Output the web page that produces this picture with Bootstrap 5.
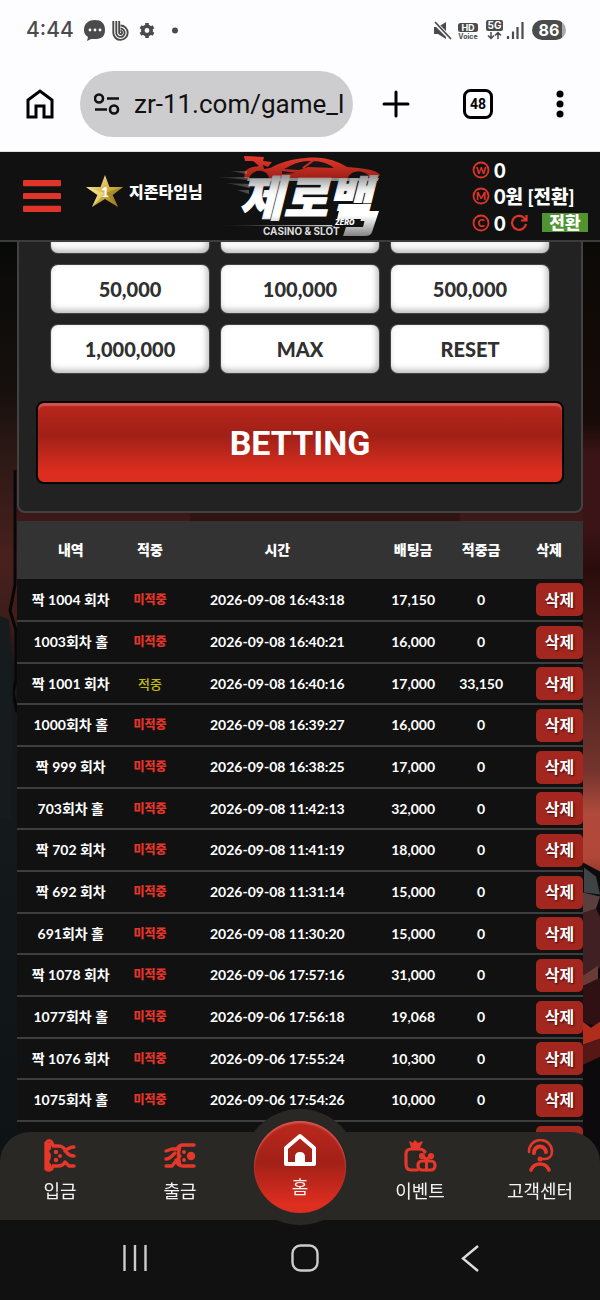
<!DOCTYPE html>
<html lang="ko">
<head>
<meta charset="utf-8">
<meta name="viewport" content="width=device-width, initial-scale=1">
<title>제로백</title>
<link href="https://cdn.jsdelivr.net/npm/bootstrap@5.3.0/dist/css/bootstrap.min.css" rel="stylesheet">
<style>
  body { font-family: Lato, "Noto Sans CJK KR", sans-serif; background: #0e0d0c; color: #fff; }
  button { font-family: inherit; }
  a { color: inherit; text-decoration: none; }

  /* phone status and browser bars */
  .phone-status { height: 60px; padding: 0 34px 0 26px; color: #4b4b4b; background: #fdfdff; }
  .clock { font: 500 21px/28px Inter, sans-serif; }
  .battery { width: 34px; height: 20px; border-radius: 10px; font: 700 16px/20px Inter, sans-serif; color: #fff;
    background: linear-gradient(90deg, #4b4b4b 87%, #aaa 87%); }
  .browser { height: 92px; padding: 0 24px 4px; background: #fdfdff; color: #000; border-bottom: 1px solid #ddd; }
  .browser-tools { gap: 50px; }
  .icon-btn { border: 0; background: none; padding: 0; color: inherit; display: flex; }
  .url { height: 66px; border-radius: 33px; background: #cdcdcf; padding: 0 8px 0 14px; margin-left: 24px; flex: 0 1 273px; min-width: 0; }
  .url input { border: 0; background: none; width: 100%; min-width: 0; padding: 0; font: 400 26px/36px Roboto, sans-serif; color: #111; outline: 0; }

  /* site header */
  .site-header { height: 90px; background: #111; border-bottom: 2px solid #3c3c3c; padding: 0 12px 0 23px; }
  .user { font-size: 16px; line-height: 24px; font-weight: 900; }
  .wallet { width: 116px; font-size: 19px; line-height: 24px; font-weight: 900; row-gap: 2px; }
  .wallet b { font-size: 20px; font-weight: 900; }
  .convert { background: #4f9430; color: #fff; border: 0; width: 46px; height: 19px; font-size: 17px; line-height: 18px; font-weight: 900; padding: 0; }

  /* page */
  .stage { position: relative; padding: 0 17px 138px; }
  .backdrop { position: absolute; inset: 0; width: 100%; height: 100%; }
  .bet-panel { position: relative; background: #222; border: 2px solid #424242; border-top: 0; border-radius: 0 0 8px 8px; padding: 0 17px 27px; margin-bottom: 8px; }
  .chips { display: grid; grid-template-columns: repeat(3, 1fr); gap: 12px; padding: 0 15px; margin-bottom: 28px; }
  .chip { height: 48px; border: 0; border-radius: 7px; background: #fff; color: #303030; font-size: 20px; font-weight: 900; line-height: 24px; padding: 0;
    box-shadow: inset -2px -3px 6px rgba(0,0,0,.28), 0 0 0 1px #444; }
  .chip-end { height: 11px; border-radius: 0 0 7px 7px; }
  .bet { display: block; width: 100%; height: 83px; border: 2px solid #080202; border-radius: 8px; color: #fff; font: 700 34px/40px Roboto, sans-serif;
    background: linear-gradient(#bb271c 0%, #a02017 40%, #dc2e20 88%, #dc2e20 100%); box-shadow: inset 0 3px 1px #cf534d; }

  .history { position: relative; table-layout: fixed; width: 100%; text-align: center; background: #111; font-size: 14px; line-height: 20px; font-weight: 700; }
  .history th { background: #333; height: 58px; font-weight: 900; padding: 0; }
  .history td { height: 42px; padding: 0; border-bottom: 2px solid #3e3e3e; white-space: nowrap; }
  .history tbody tr:nth-child(3n) td { height: 41px; }
  .history .miss { color: #e5352a; font-size: 12px; font-weight: 900; }
  .history .hit { color: #c5bb10; font-size: 13px; font-weight: 500; }
  .history tbody tr:last-child td { border: 0; }
  .del { display: block; margin-left: auto; width: 47px; height: 33px; border: 0; border-radius: 5px; background: #a3271f; color: #fff; font-size: 16px; line-height: 24px; font-weight: 700; padding: 0; text-shadow: 1px 1px 2px #400; }

  /* bottom bars */
  .tabs { position: relative; height: 88px; background: #2a2825; border-radius: 30px 30px 0 0; display: grid; grid-template-columns: repeat(5, 1fr); font-size: 18px; line-height: 24px; }
  .tabs a { display: flex; flex-direction: column; align-items: center; padding-top: 7px; gap: 6px; color: #f3f3f3; position: relative; }
  .home-tab { position: relative; }
  .home-tab::before { content: ""; position: absolute; width: 116px; height: 116px; border-radius: 50%; background: #2a2825; left: calc(50% - 58px); top: -23px; }
  .tabs .home-link { width: 92px; height: 92px; border-radius: 50%; margin: -11px auto 0; padding-top: 10px;
    background: linear-gradient(#bd281d 0%, #a12017 45%, #dd2e20 90%); box-shadow: inset 0 2px 2px #d45b54; }
  .system-nav { height: 80px; background: #111; padding: 0 116px 4px; }
</style>
</head>
<body>
<div class="sticky-top">
  <div class="phone-status d-flex align-items-center">
    <span class="clock">4:44</span>
    <svg class="ms-2" width="102" height="24" viewBox="80 18 102 24" fill="#4b4b4b">
      <path d="M93 20c6 0 10 3 10 10s-4 9-10 9h-4l-4 2 1-4c-3-2-4-4-4-7 0-7 5-10 11-10z"/>
      <g fill="#fff"><circle cx="88" cy="30" r="1.4"/><circle cx="93" cy="30" r="1.4"/><circle cx="98" cy="30" r="1.4"/></g>
      <g fill="none" stroke="#4b4b4b" stroke-width="1.9"><path d="M111.300 21V33A7.200 7.200 0 1 0 118.500 25.500"/><path d="M114.300 21V32A4.200 4.200 0 1 0 118.500 28.500"/><path d="M117.200 21V32A1.500 1.500 0 1 0 118.500 31"/></g>
      <circle cx="145" cy="30.500" r="4.200" fill="none" stroke="#4b4b4b" stroke-width="3.600"/>
      <g stroke="#4b4b4b" stroke-width="3.600"><path d="M145 23v3M145 35v3M138.500 26.700l2.600 1.500M148.900 32.800l2.600 1.500M138.500 34.300l2.600-1.500M148.900 28.200l2.600-1.500"/></g>
      <circle cx="173" cy="30.500" r="3"/>
    </svg>
    <svg class="ms-auto me-2" width="92" height="24" viewBox="433 18 92 24" fill="#4b4b4b">
      <path d="M435 27h4l8-5v17l-8-5h-4z"/><path d="M434 21l18 18" stroke="#fdfdff" stroke-width="4"/><path d="M436 22l16 17" stroke="#4b4b4b" stroke-width="1.800"/>
      <rect x="459" y="23" width="20" height="9" rx="2.500"/><text x="469" y="30.500" text-anchor="middle" font-family="Inter" font-weight="700" font-size="9" fill="#fff">HD</text>
      <text x="469" y="38.500" text-anchor="middle" font-family="Inter" font-weight="700" font-size="7">Voice</text>
      <rect x="487" y="20" width="17" height="11" rx="2"/><text x="495.500" y="29" text-anchor="middle" font-family="Inter" font-weight="700" font-size="10" fill="#fff">5G</text>
      <path d="M492 32v6m-3-2.500l3 3 3-3M499 39v-6m-3 2.500l3-3 3 3" fill="none" stroke="#4b4b4b" stroke-width="1.500"/>
      <path d="M509 36v3M514 31.500V39M518.500 27v12M523.500 22v17" stroke="#4b4b4b" stroke-width="2.200"/>
    </svg>
    <span class="battery text-center">86</span>
  </div>
  <div class="browser d-flex align-items-center">
    <button class="icon-btn" aria-label="Home"><svg width="32" height="32" viewBox="0 0 32 32" fill="none" stroke="#000" stroke-width="3"><path d="M4 29V12L16 3l12 9v17h-8V18h-8v11z"/></svg></button>
    <div class="url d-flex align-items-center gap-2">
      <svg class="flex-shrink-0 me-1" width="28" height="24" viewBox="0 0 28 24" fill="none" stroke="#111" stroke-width="2.600"><circle cx="5" cy="6.500" r="4"/><path d="M13 6.500h12M1 17.500h12"/><circle cx="20" cy="17.500" r="4"/></svg>
      <input type="text" aria-label="Address" value="zr-11.com/game_l">
    </div>
    <div class="browser-tools d-flex ms-auto">
      <button class="icon-btn" aria-label="New tab"><svg width="32" height="32" viewBox="0 0 32 32" stroke="#000" stroke-width="3" stroke-linecap="round"><path d="M16 4v24M4 16h24"/></svg></button>
      <button class="icon-btn" aria-label="Tabs"><svg width="32" height="32" viewBox="0 0 32 32"><rect x="2.500" y="2.500" width="27" height="27" rx="6" fill="none" stroke="#000" stroke-width="3"/><text x="16" y="21" text-anchor="middle" font-family="Roboto" font-weight="700" font-size="14">48</text></svg></button>
      <button class="icon-btn" aria-label="Menu"><svg width="32" height="32" viewBox="0 0 32 32"><circle cx="16" cy="6" r="3.500"/><circle cx="16" cy="16" r="3.500"/><circle cx="16" cy="26" r="3.500"/></svg></button>
    </div>
  </div>
  <header class="site-header d-flex align-items-center">
    <button class="icon-btn" aria-label="Menu"><svg width="38" height="32" viewBox="0 0 38 36" preserveAspectRatio="none" fill="#df3529"><rect width="38" height="7" rx="1"/><rect y="14.500" width="38" height="7" rx="1"/><rect y="29" width="38" height="7" rx="1"/></svg></button>
    <div class="user d-flex align-items-center ms-4 pb-2">
      <svg class="me-1" width="40" height="36" viewBox="0 0 40 36">
        <defs><linearGradient id="gold" x2="1" y2="1"><stop stop-color="#fff6b8"/><stop offset=".5" stop-color="#d4b244"/><stop offset="1" stop-color="#8b6b16"/></linearGradient></defs>
        <path d="M20 1l4.500 12L38 13 27.500 21 33 33 20 25 7 33l5.500-12L1 13l14.500 0z" fill="url(#gold)"/>
        <path d="M20 1v18L7 33l5.500-12L1 13l19 6z" fill="#f8e892" opacity=".65"/><path d="M20 19l18-6-10.500 8L33 33z" fill="#9c7b20" opacity=".6"/>
        <text x="20" y="23" text-anchor="middle" font-family="Lato" font-size="14" font-weight="900" fill="#fff">1</text>
      </svg>
      <span>지존타임님</span>
    </div>
    <a href="#" class="ms-2" aria-label="제로백"><svg width="174" height="88" viewBox="213 152 174 88">
      <defs>
        <linearGradient id="steel" gradientUnits="userSpaceOnUse" x1="0" y1="174" x2="0" y2="238"><stop stop-color="#888"/><stop offset=".25" stop-color="#eee"/><stop offset=".35" stop-color="#fff"/><stop offset=".65" stop-color="#fff"/><stop offset="1" stop-color="#777"/></linearGradient>
        <linearGradient id="paint" x2="0" y2="1"><stop stop-color="#e83a2c"/><stop offset="1" stop-color="#9e1f17"/></linearGradient>
        <linearGradient id="speed"><stop stop-color="#fff" stop-opacity="0"/><stop offset="1" stop-color="#ccc"/></linearGradient>
      </defs>
      <path d="M246 156l20 1-1 4 9 1-4 5-5-2 1 4 6-1c9-5 21-9 36-10 18-2 31 3 41 9 16 1 30 3 33 8l-2 3h-8c-3-8-19-9-22 0h-79c-2-9-16-10-20 0h-5l1-6c3-5 9-5 14-6l-6-5h-8z" fill="url(#paint)"/>
      <path d="M292 166c7-4 14-5 22-5 10 0 17 3 22 7l-26-1-9 3-15-1zM284 171l14 2-14 1z" fill="#161616"/>
      <path d="M316 160l-11 8" stroke="#c93025" stroke-width="2"/>
      <g fill="url(#speed)"><path d="M217 177h34v3zM232 171h17v3zM228 183l24 1v4zM239 190h12v4zM220 225h117v1.500z"/></g>
      <path d="M250 178h131l-1 3H249z" fill="#888"/>
      <text x="241" y="216" font-family="Noto Sans CJK KR" font-weight="900" font-style="italic" font-size="48" fill="url(#steel)" stroke="url(#steel)" stroke-width="1">제로백</text>
      <path d="M341 211h40l-7 21q-1 4-7 4h-22l3-9h17l2-8h-28z" fill="url(#steel)"/>
      <path d="M337 219h26l-2 7h-27z" fill="#111"/>
      <text x="337" y="225" font-family="Inter" font-weight="900" font-style="italic" font-size="7" fill="#fff">ZERO</text>
      <text x="265" y="235" font-family="Inter" font-weight="700" font-size="10" fill="#ddd">CASINO &amp; SLOT</text>
    </svg></a>
    <div class="wallet d-flex flex-column ms-auto">
      <div class="d-flex align-items-center gap-1"><svg width="18" height="18" viewBox="0 0 18 18"><circle cx="9" cy="9" r="7.500" fill="none" stroke="#df3529" stroke-width="1.800"/><text x="9" y="12.500" text-anchor="middle" font-family="Lato" font-size="10" font-weight="900" fill="#df3529">W</text></svg><b>0</b></div>
      <div class="d-flex align-items-center gap-1 text-nowrap"><svg width="18" height="18" viewBox="0 0 18 18"><circle cx="9" cy="9" r="7.500" fill="none" stroke="#df3529" stroke-width="1.800"/><text x="9" y="12.500" text-anchor="middle" font-family="Lato" font-size="11" font-weight="900" fill="#df3529">M</text></svg><a href="#"><b>0</b>원 [전환]</a></div>
      <div class="d-flex align-items-center gap-1"><svg width="18" height="18" viewBox="0 0 18 18"><circle cx="9" cy="9" r="7.500" fill="none" stroke="#df3529" stroke-width="1.800"/><text x="9" y="13" text-anchor="middle" font-family="Lato" font-size="11" font-weight="900" fill="#df3529">C</text></svg><b>0</b>
        <button class="icon-btn" aria-label="새로고침"><svg width="18" height="18" viewBox="0 0 18 18" fill="none" stroke="#df3529" stroke-width="2.200"><path d="M16 10a7 7 0 1 1-3-7l3 3M16.500 1v5.500H11"/></svg></button>
        <button class="convert ms-auto">전환</button></div>
    </div>
  </header>
</div>

<main class="stage">
  <svg class="backdrop" viewBox="0 242 600 1058" preserveAspectRatio="none" aria-hidden="true">
    <defs>
      <linearGradient id="bgl" x2="0" y2="1"><stop stop-color="#080a08"/><stop offset=".14" stop-color="#16100d"/><stop offset=".2" stop-color="#2c1815"/><stop offset=".3" stop-color="#48211d"/><stop offset=".36" stop-color="#3b1d1a"/><stop offset=".4" stop-color="#17191a"/><stop offset=".6" stop-color="#13191b"/><stop offset="1" stop-color="#0b1013"/></linearGradient>
      <linearGradient id="bgr" x2="0" y2="1"><stop stop-color="#0b0a06"/><stop offset=".17" stop-color="#180b09"/><stop offset=".2" stop-color="#3a1416"/><stop offset=".27" stop-color="#3a1416"/><stop offset=".31" stop-color="#2a0c0c"/><stop offset=".44" stop-color="#5a2824"/><stop offset=".5" stop-color="#74342d"/><stop offset=".54" stop-color="#b04a3c"/><stop offset=".58" stop-color="#b14738"/><stop offset=".61" stop-color="#7c3028"/></linearGradient>
    </defs>
    <path fill="url(#bgl)" d="M0 242h300v1058H0z"/><path fill="url(#bgr)" d="M300 242h300v1058H300z"/>
    <path fill="#3d1818" d="M17 505h566v20H17z"/><path fill="#301412" d="M190 505h270v20H190z"/>
    <path d="M15 470v115l-5 25 6 20v50l-3 12 4 20" fill="none" stroke="#080606" stroke-width="3"/>
    <path fill="#161b1d" d="M0 616l9 3 4 60-2 140H0z"/>
    <path fill="#0c0a0c" d="M583 862l17 9v429h-17z"/><path fill="#3e4446" d="M584 867l12 9 4 18-16-2z"/><path fill="#5a3f3f" d="M583 892l17 4-4 12-13 5z"/><path fill="#402022" d="M583 912l13-4 4 8v50l-17 20z"/><path fill="#6a3a37" d="M583 975l15-10v16l-15 4z"/>
    <path fill="#301113" d="M583 985l17-8v50l-17-6z"/><path fill="#b02d1c" d="M583 1021l8 6 9-6v17l-17 6z"/><path fill="#571815" d="M583 1044l17-6v18l-17 8z"/>
  </svg>

  <section class="bet-panel">
    <div class="chips">
      <button class="chip chip-end" aria-label="5,000"></button><button class="chip chip-end" aria-label="10,000"></button><button class="chip chip-end" aria-label="30,000"></button>
      <button class="chip">50,000</button><button class="chip">100,000</button><button class="chip">500,000</button>
      <button class="chip">1,000,000</button><button class="chip">MAX</button><button class="chip">RESET</button>
    </div>
    <button class="bet">BETTING</button>
  </section>

  <table class="history">
    <colgroup><col style="width:19%"><col style="width:9%"><col style="width:36%"><col style="width:12%"><col style="width:12%"><col style="width:12%"></colgroup>
    <thead><tr><th>내역</th><th>적중</th><th>시간</th><th>배팅금</th><th>적중금</th><th>삭제</th></tr></thead>
    <tbody>
      <tr><td>짝 1004 회차</td><td class="miss">미적중</td><td>2026-09-08 16:43:18</td><td>17,150</td><td>0</td><td><button class="del">삭제</button></td></tr>
      <tr><td>1003회차 홀</td><td class="miss">미적중</td><td>2026-09-08 16:40:21</td><td>16,000</td><td>0</td><td><button class="del">삭제</button></td></tr>
      <tr><td>짝 1001 회차</td><td class="hit">적중</td><td>2026-09-08 16:40:16</td><td>17,000</td><td>33,150</td><td><button class="del">삭제</button></td></tr>
      <tr><td>1000회차 홀</td><td class="miss">미적중</td><td>2026-09-08 16:39:27</td><td>16,000</td><td>0</td><td><button class="del">삭제</button></td></tr>
      <tr><td>짝 999 회차</td><td class="miss">미적중</td><td>2026-09-08 16:38:25</td><td>17,000</td><td>0</td><td><button class="del">삭제</button></td></tr>
      <tr><td>703회차 홀</td><td class="miss">미적중</td><td>2026-09-08 11:42:13</td><td>32,000</td><td>0</td><td><button class="del">삭제</button></td></tr>
      <tr><td>짝 702 회차</td><td class="miss">미적중</td><td>2026-09-08 11:41:19</td><td>18,000</td><td>0</td><td><button class="del">삭제</button></td></tr>
      <tr><td>짝 692 회차</td><td class="miss">미적중</td><td>2026-09-08 11:31:14</td><td>15,000</td><td>0</td><td><button class="del">삭제</button></td></tr>
      <tr><td>691회차 홀</td><td class="miss">미적중</td><td>2026-09-08 11:30:20</td><td>15,000</td><td>0</td><td><button class="del">삭제</button></td></tr>
      <tr><td>짝 1078 회차</td><td class="miss">미적중</td><td>2026-09-06 17:57:16</td><td>31,000</td><td>0</td><td><button class="del">삭제</button></td></tr>
      <tr><td>1077회차 홀</td><td class="miss">미적중</td><td>2026-09-06 17:56:18</td><td>19,068</td><td>0</td><td><button class="del">삭제</button></td></tr>
      <tr><td>짝 1076 회차</td><td class="miss">미적중</td><td>2026-09-06 17:55:24</td><td>10,300</td><td>0</td><td><button class="del">삭제</button></td></tr>
      <tr><td>1075회차 홀</td><td class="miss">미적중</td><td>2026-09-06 17:54:26</td><td>10,000</td><td>0</td><td><button class="del">삭제</button></td></tr>
      <tr><td></td><td></td><td></td><td></td><td></td><td><button class="del" aria-label="삭제"></button></td></tr>
    </tbody>
  </table>
</main>

<div class="fixed-bottom">
  <nav class="tabs">
    <a href="#"><svg width="34" height="34" viewBox="0 0 34 34" fill="none" stroke="#e5372a" stroke-width="3.400" stroke-linejoin="round" stroke-linecap="round"><path d="M3 4v26c3 2 6 1 7-3h5c4 0 6-2 7-4l4 4h5M10 7h5c5 0 6 2 9 7 3 3 5 3 7 3M10 7C9 2 6 0 3 4M22 12c3-3 5-4 9-4"/><path d="M2 4h6v6l-2 2q4 5 0 11l2 2v5H2z" fill="#e5372a" stroke="none"/><g fill="#e5372a" stroke="none"><circle cx="13" cy="13" r="2.200"/><circle cx="17" cy="17" r="2"/><circle cx="13" cy="21" r="2.200"/></g></svg>입금</a>
    <a href="#"><svg width="34" height="34" viewBox="0 0 34 34" fill="none" stroke="#e5372a" stroke-width="3.400" stroke-linecap="round" stroke-linejoin="round"><path d="M31 6H20c-4 0-5 2-6 4H9l-6 2M31 27H20c-5 0-6-3-7-6M17 7q-3 10 0 19M3 27h6l8-10M3 20c4 0 6-3 9-6"/><circle cx="28" cy="17" r="4.200" fill="#e5372a" stroke="none"/><g fill="#e5372a" stroke="none"><circle cx="21" cy="13" r="2"/><circle cx="21" cy="21" r="2"/></g></svg>출금</a>
    <div class="home-tab"><a href="#" class="home-link"><svg width="38" height="38" viewBox="0 0 38 38"><path d="M5 33V17L19 5l14 12v16z" fill="none" stroke="#fff" stroke-width="4" stroke-linejoin="round"/><path d="M14 34v-8q0-5 5-5t5 5v8z" fill="#fff"/></svg>홈</a></div>
    <a href="#"><svg width="34" height="34" viewBox="0 0 34 34" fill="none" stroke="#e5372a" stroke-width="3.200" stroke-linecap="round" stroke-linejoin="round"><path d="M14 31H8q-5 0-5-6V15q0-5 5-5h8q4 0 6 3"/><path d="M7 3l3 2 2-3 3 3 4-2-3 6H9z" fill="#e5372a" stroke-width="1.500"/><rect x="15" y="22" width="17" height="9" rx="4"/><path d="M23.500 22v9M20 17l3.500 4 3.500-4" stroke-width="3"/><circle cx="19" cy="17" r="1.500"/><circle cx="28" cy="17" r="1.500"/></svg>이벤트</a>
    <a href="#"><svg width="34" height="34" viewBox="0 0 34 34" fill="none" stroke="#e5372a" stroke-width="2.600" stroke-linecap="round"><path d="M6 13a11.500 11.500 0 1 1 23-1c0 5-3 8-7 8h-4"/><path d="M11 14a6 6 0 1 1 12-1" stroke-width="4"/><circle cx="17" cy="20" r="2.500" fill="#e5372a" stroke="none"/><path d="M8 31c3-8 15-8 18 0" stroke-width="3.600"/></svg>고객센터</a>
  </nav>
  <div class="system-nav d-flex align-items-center justify-content-between">
    <button class="icon-btn" aria-label="Recent apps"><svg width="38" height="30" viewBox="0 0 38 30" stroke="#ccc" stroke-width="2.400"><path d="M8.500 2v26M19 2v26M29.500 2v26"/></svg></button>
    <button class="icon-btn" aria-label="Home"><svg width="30" height="30" viewBox="0 0 30 30"><rect x="2.500" y="2.500" width="25" height="25" rx="8" fill="none" stroke="#ccc" stroke-width="2.400"/></svg></button>
    <button class="icon-btn" aria-label="Back"><svg width="28" height="30" viewBox="0 0 28 30" fill="none" stroke="#ddd" stroke-width="2.400"><path d="M22 3L7 15.500 22 28"/></svg></button>
  </div>
</div>
<script src="https://cdn.jsdelivr.net/npm/bootstrap@5.3.0/dist/js/bootstrap.bundle.min.js"></script>
</body>
</html>
